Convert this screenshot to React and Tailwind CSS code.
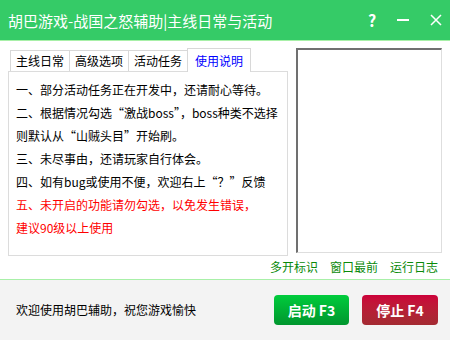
import React, { useState } from 'react';

const tabs = ['主线日常', '高级选项', '活动任务', '使用说明'];

const lines = [
  { text: '一、部分活动任务正在开发中，还请耐心等待。' },
  { text: '二、根据情况勾选“激战boss”，boss种类不选择' },
  { text: '则默认从“山贼头目”开始刷。' },
  { text: '三、未尽事由，还请玩家自行体会。' },
  { text: '四、如有bug或使用不便，欢迎右上“？”反馈' },
  { text: '五、未开启的功能请勿勾选，以免发生错误，', red: true },
  { text: '建议90级以上使用', red: true },
];

const font = { fontFamily: '"Noto Sans CJK SC", "Noto Sans", sans-serif' };

export default function App() {
  const [active, setActive] = useState(3);

  return (
    <div className="w-[450px] h-[340px] flex flex-col bg-white overflow-hidden" style={font}>
      {/* title bar */}
      <div className="h-[40px] bg-[#35cb67] flex items-center pl-[8px] pr-[8px] text-white">
        <span className="text-[15px] leading-none">胡巴游戏-战国之怒辅助|主线日常与活动</span>
        <div className="ml-auto flex items-center">
          <span className="text-[16px] font-semibold leading-none w-[12px] text-center">?</span>
          <span className="ml-[19px] w-[12px] h-[2px] bg-white" />
          <svg className="ml-[21px]" width="12" height="12" viewBox="0 0 12 12">
            <path d="M1 1 L11 11 M11 1 L1 11" stroke="white" strokeWidth="1.5" />
          </svg>
        </div>
      </div>

      {/* main */}
      <div className="flex-1 border-t border-[#a8f0a8] pl-[8px] pr-[8px] pt-[7px] flex flex-col">
        <div className="flex items-start">
          <div className="w-[280px] flex flex-col">
            <div className="flex items-end pl-[2px] h-[23px]">
              {tabs.map((t, i) => (
                <button
                  key={t}
                  onClick={() => setActive(i)}
                  className={
                    i === active
                      ? 'relative -mb-px h-[24px] px-[7px] text-[12px] leading-none text-[#0000ff] bg-white border border-b-0 border-[#d8d8d8] z-10'
                      : 'h-[21px] px-[5px] text-[12px] leading-none text-black bg-white border border-[#d8d8d8] border-b-0 -mr-px'
                  }
                >
                  {t}
                </button>
              ))}
            </div>
            <div className="h-[185px] border border-[#dcdcdc] pl-[7px] pt-[6px]">
              {lines.map((l, i) => (
                <div
                  key={i}
                  className={`text-[12px] leading-[23px] whitespace-nowrap ${l.red ? 'text-[#ff0000]' : 'text-black'}`}
                >
                  {l.text}
                </div>
              ))}
            </div>
          </div>
          <div className="ml-[8px] w-[146px] h-[205px] bg-white border-l-2 border-t-2 border-l-[#707070] border-t-[#707070] border-r border-b border-r-[#dedede] border-b-[#dedede]" />
        </div>
        <div className="flex justify-end gap-[12px] pr-[4px] mt-[3px] text-[12px] leading-[16px] text-[#0a8a0a]">
          <span>多开标识</span>
          <span>窗口最前</span>
          <span>运行日志</span>
        </div>
      </div>

      {/* bottom bar */}
      <div className="h-[61px] border-t border-[#a8f0a8] bg-[#f3f3f3] flex items-center pl-[16px] pr-[12px]">
        <span className="text-[12px] text-black">欢迎使用胡巴辅助，祝您游戏愉快</span>
        <div className="ml-auto flex gap-[13px]">
          <button className="w-[75px] h-[30px] rounded-[4px] bg-gradient-to-b from-[#00cc3c] to-[#00962e] text-white text-[14px] font-semibold">
            启动 F3
          </button>
          <button className="w-[76px] h-[30px] rounded-[4px] bg-gradient-to-b from-[#cc003a] to-[#a32a32] text-white text-[14px] font-semibold">
            停止 F4
          </button>
        </div>
      </div>
    </div>
  );
}
